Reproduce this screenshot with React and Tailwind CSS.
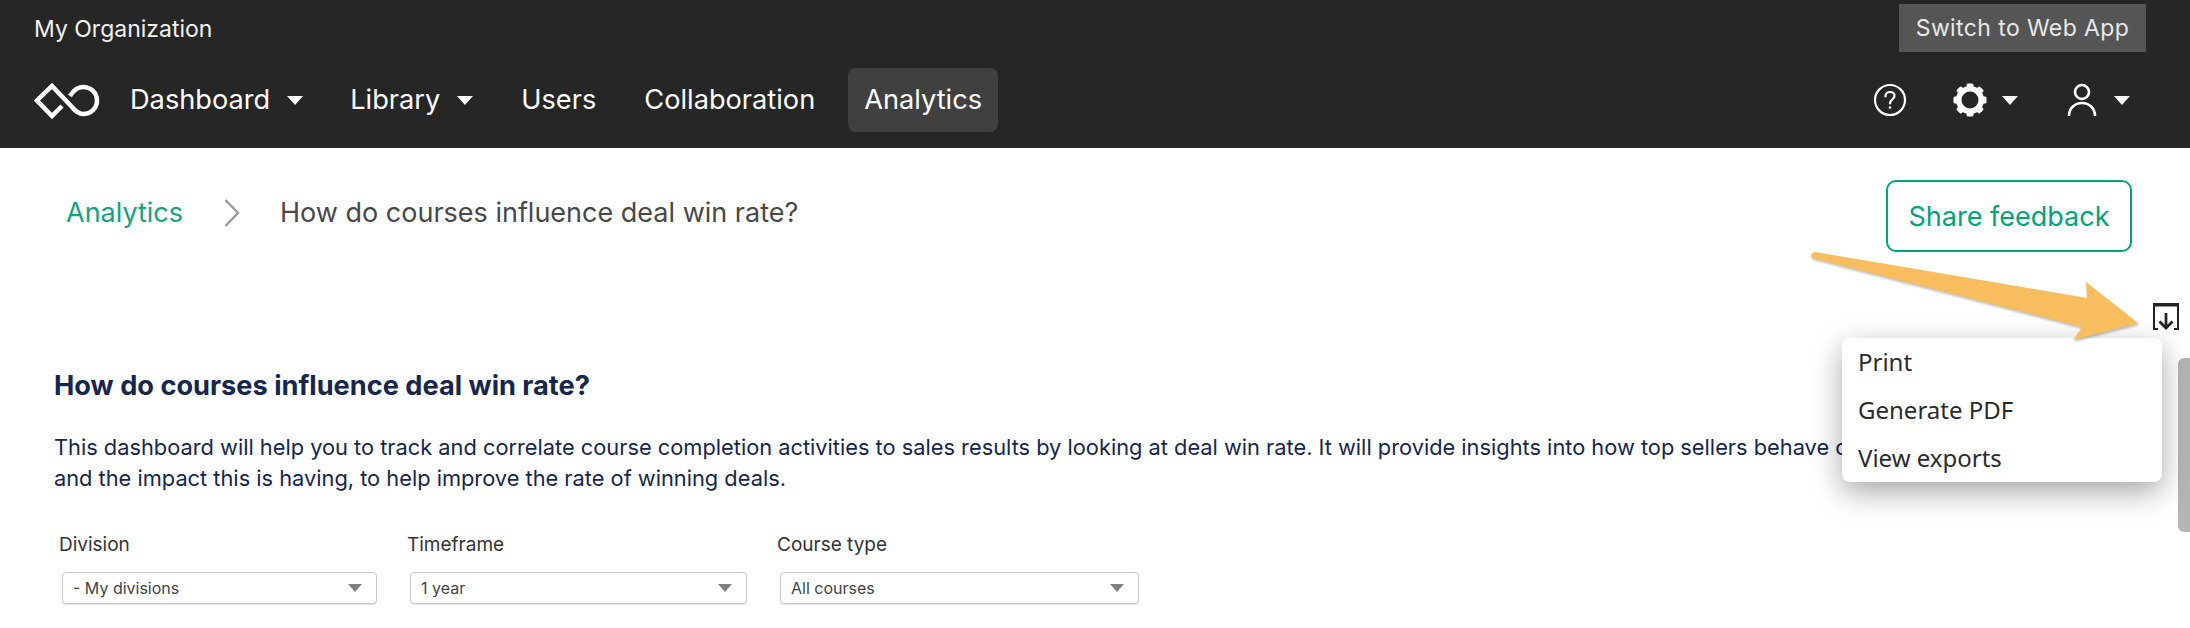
import React from 'react';

const Caret = ({ className = '' }) => (
    <svg width="16" height="9" viewBox="0 0 16 9" className={className}>
        <path d="M0 0 H16 L8 9 Z" fill="currentColor" />
    </svg>
);

const Logo = () => (
    <svg width="66" height="40" viewBox="34 79 66 40" fill="none" stroke="white" strokeWidth="4.5" className="mr-[30px] shrink-0">
        <path d="M62 105 L52 115 L37 99.5 L52 85 L72 106 C76 111 79 113 83 113 C91 113 97 107 97 99.5 C97 92 91 86 83 86 C77 86 73 90 70 95" />
    </svg>
);

const Gear = () => {
    const teeth = [0, 45, 90, 135, 180, 225, 270, 315];
    return (
        <svg width="34" height="34" viewBox="0 0 34 34" fill="white">
            <path
                fillRule="evenodd"
                d="M17 3 A14 14 0 1 0 17 31 A14 14 0 1 0 17 3 Z M17 8.5 A8.5 8.5 0 1 1 17 25.5 A8.5 8.5 0 1 1 17 8.5 Z"
            />
            {teeth.map((a) => (
                <rect key={a} x="13.5" y="0.5" width="7" height="5" rx="1.5" transform={`rotate(${a} 17 17)`} />
            ))}
        </svg>
    );
};

const NavItem = ({ label, caret, active, className = '' }) => (
    <div className={`flex h-16 items-center rounded-lg ${active ? 'bg-[#404040] px-4' : ''} ${className}`}>
        <span className="pt-px">{label}</span>
        {caret && <Caret className="ml-[17px]" />}
    </div>
);

const Field = ({ label, value, width, labelClass, textClass = 'pl-[10px]' }) => (
    <div className={`${width} shrink-0`}>
        <div className={`text-[19px] leading-[26px] text-[#333] ${labelClass}`}>{label}</div>
        <div className={`mt-[14px] flex h-[32px] items-center justify-between rounded-[4px] border border-[#ccc] bg-white pr-[14px] text-[16px] text-[#444] shadow-[0_1px_1px_rgba(0,0,0,0.12)] ${textClass}`}>
            <span>{value}</span>
            <svg width="14" height="8" viewBox="0 0 14 8"><path d="M0 0 H14 L7 8 Z" fill="#808080" /></svg>
        </div>
    </div>
);

export default function App() {
    return (
        <div className="relative h-[628px] w-[2190px] overflow-hidden bg-white font-['Inter',sans-serif]">
            <header className="h-[148px] bg-[#262626] text-white">
                <div className="flex h-[56px] items-start justify-between pl-[34px] pr-[44px] pt-1">
                    <div className="text-[23px] leading-[50px] text-[#f2f2f2]">My Organization</div>
                    <div className="flex h-12 w-[247px] items-center justify-center bg-[#555] text-[23px] tracking-[0.4px] text-[#e8e8e8]">
                        Switch to Web App
                    </div>
                </div>
                <nav className="mt-3 flex h-16 items-center pl-[34px] pr-[60px] text-[27.2px]">
                    <Logo />
                    <NavItem label="Dashboard" caret />
                    <NavItem label="Library" caret className="ml-[47px]" />
                    <NavItem label="Users" className="ml-[48px]" />
                    <NavItem label="Collaboration" className="ml-[48px]" />
                    <NavItem label="Analytics" active className="ml-[33px]" />
                    <div className="ml-auto flex items-center">
                        <svg width="34" height="34" viewBox="0 0 34 34" fill="none" stroke="white" strokeWidth="2.2">
                            <circle cx="17" cy="17" r="15" />
                            <path d="M12.5 13.5 C12.5 10.5 14.5 9 17 9 C19.7 9 21.5 10.7 21.5 13 C21.5 16 17 16.5 17 20.5" strokeLinecap="round" />
                            <circle cx="17" cy="24.5" r="1.3" fill="white" stroke="none" />
                        </svg>
                        <div className="ml-[46px]"><Gear /></div>
                        <Caret className="ml-[15px]" />
                        <svg width="30" height="34" viewBox="0 0 30 34" fill="none" stroke="white" strokeWidth="2.6" className="ml-[49px]">
                            <circle cx="15" cy="9" r="7" />
                            <path d="M2 33 C2 25 8 20 15 20 C22 20 28 25 28 33" />
                        </svg>
                        <Caret className="ml-[17px]" />
                    </div>
                </nav>
            </header>

            <div className="flex items-start justify-between pl-[66px] pr-[58px] pt-8">
                <div className="flex items-center pt-[9px] text-[27px] leading-[48px]">
                    <span className="text-[#0fa47f]">Analytics</span>
                    <svg width="16" height="28" viewBox="0 0 16 28" fill="none" stroke="#999" strokeWidth="2.4" className="ml-[41px] mr-[40px]">
                        <path d="M1.5 1 L14 14 L1.5 27" />
                    </svg>
                    <span className="text-[#484848]">How do courses influence deal win rate?</span>
                </div>
                <button type="button" className="flex h-[72px] w-[246px] items-center justify-center rounded-[10px] border-2 border-[#00a37a] pt-[2px] text-[27px] text-[#00a37a]">
                    Share feedback
                </button>
            </div>

            <div className="flex justify-end pr-[11px] pt-[51px]">
                <svg width="26" height="27" viewBox="0 0 26 27" fill="none" stroke="#222" strokeWidth="2">
                    <path d="M5 26 H1 V1 H25 V26 H21" />
                    <path d="M0 2 H26" strokeWidth="3" />
                    <path d="M13 10 V25 M6.5 18.5 L13 25 L19.5 18.5" strokeWidth="2.7" />
                </svg>
            </div>

            <main className="pl-[54px] pt-[38px]">
                <h1 className="text-[27.2px] font-bold leading-9 text-[#16264c]">How do courses influence deal win rate?</h1>
                <p className="mt-[28px] text-[21.8px] leading-[31px] text-[#16264c]">
                    <span className="block whitespace-nowrap">This dashboard will help you to track and correlate course completion activities to sales results by looking at deal win rate. It will provide insights into how top sellers behave c</span>
                    <span className="block">and the impact this is having, to help improve the rate of winning deals.</span>
                </p>
                <div className="mt-[38px] flex gap-[33px] pl-2">
                    <Field label="Division" value="- My divisions" width="w-[315px]" labelClass="-ml-[3px]" />
                    <Field label="Timeframe" value="1 year" width="w-[337px]" labelClass="-ml-[3px]" />
                    <Field label="Course type" value="All courses" width="w-[359px]" labelClass="-ml-[3px]" />
                </div>
            </main>

            <svg width="340" height="100" viewBox="1805 248 340 100" className="absolute left-[1805px] top-[248px] z-20 drop-shadow-[1px_2px_1px_rgba(0,0,0,0.25)]">
                <path d="M1815 252 L2087 298 L2086 282 L2138 323 L2073 340 L2082 327 L1812 258 Q1809 254 1815 252 Z" fill="#f7bd5f" />
            </svg>

            <div className="absolute left-[1842px] top-[338px] z-10 h-36 w-80 rounded-lg bg-white pl-4 font-['Noto_Sans',sans-serif] text-[24px] leading-[48px] text-[#2b2b2b] shadow-[0_10px_30px_rgba(0,0,0,0.35)]">
                <div>Print</div>
                <div>Generate PDF</div>
                <div>View exports</div>
            </div>

            <div className="absolute left-[2178px] top-[358px] h-[174px] w-3 rounded-l-md bg-[#b5b5b5]" />
        </div>
    );
}
